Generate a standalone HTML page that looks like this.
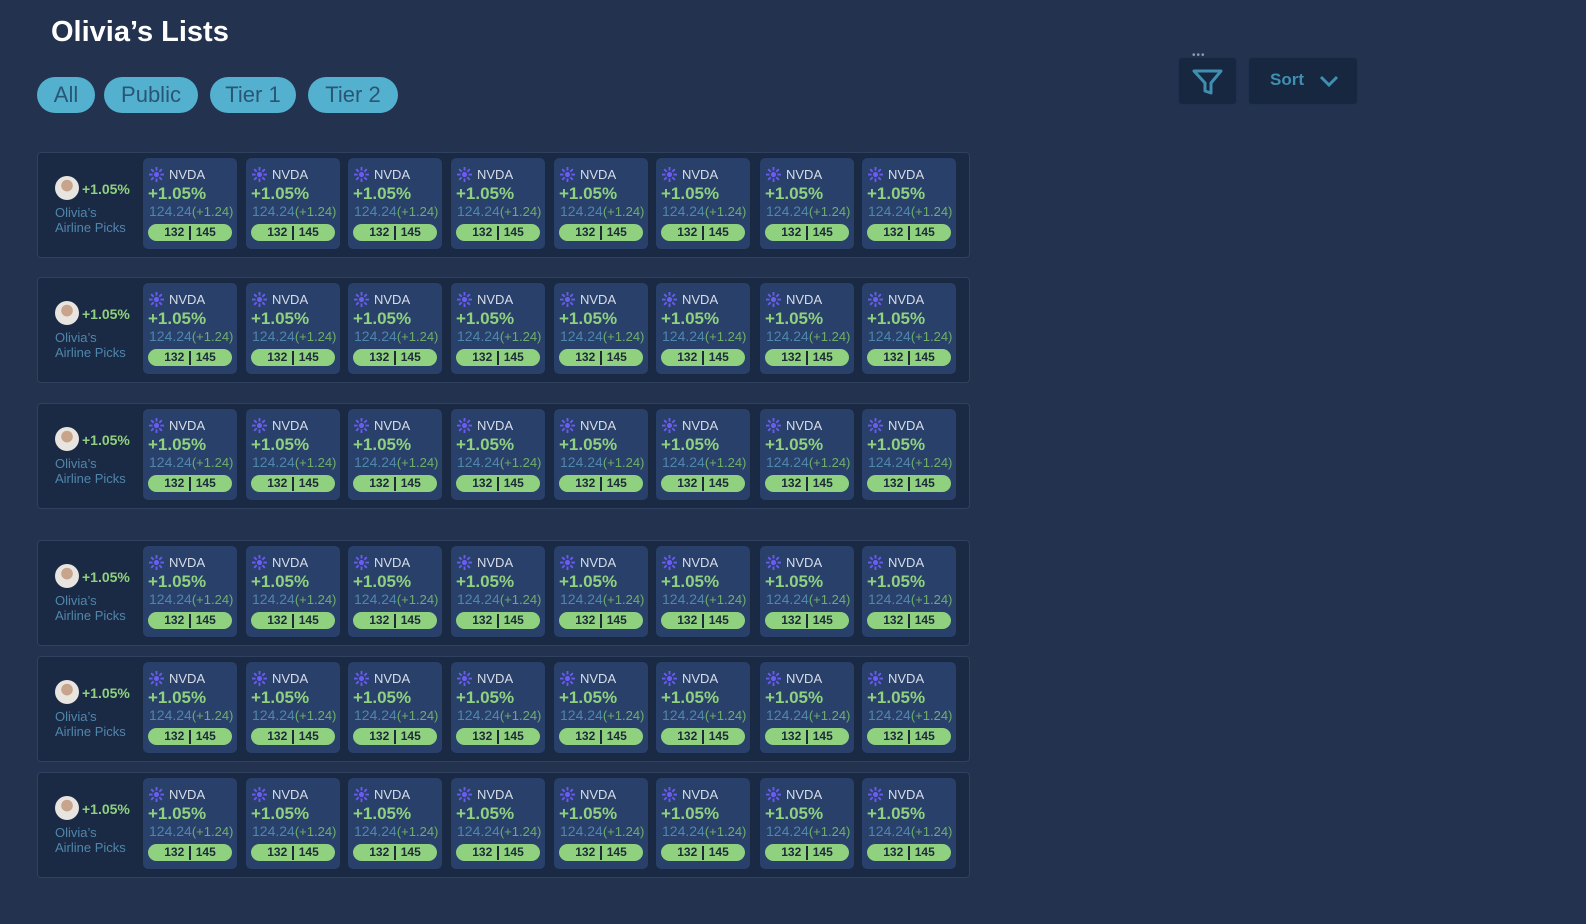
<!DOCTYPE html>
<html><head><style>
body{margin:0;width:1586px;height:924px;background:#22324f;font-family:"Liberation Sans",sans-serif;position:relative;overflow:hidden}
h1{position:absolute;left:51px;top:16px;margin:0;color:#fff;font-size:29px;font-weight:bold}
.tab{position:absolute;top:77px;height:36px;border-radius:18px;background:#53b0ce;color:#2a5676;font-size:22px;line-height:36px;text-align:center}
.row{position:absolute;left:37px;width:931px;height:104px;background:#1b2a44;border:1px solid #2f415e;border-radius:4px}
.lft{position:absolute;left:17px;top:23px}
.av{position:absolute;left:0;top:0;width:24px;height:24px;border-radius:50%;background:radial-gradient(circle at 50% 40%,#c9a48c 0 30%,#e8e4e0 32%);}
.lp{position:absolute;left:27px;top:5px;color:#8fd17f;font-size:14px;font-weight:bold;white-space:nowrap}
.ln{position:absolute;left:0;top:29px;color:#4f86ac;font-size:13px;line-height:15px;white-space:nowrap}
.card{position:absolute;top:4px;width:94px;height:91px;background:#28406a;border:1px solid #1a2840;border-radius:6px}
.ic{position:absolute;left:6px;top:9px;width:15px;height:15px}
.tk{position:absolute;left:26px;top:9px;color:#d8dde8;font-size:13px}
.pc{position:absolute;left:5px;top:26px;color:#8fd17f;font-size:17px;font-weight:bold}
.pr{position:absolute;left:6px;top:45px;color:#4f86ac;font-size:14px;white-space:nowrap}
.pr span{color:#6fae6a;font-size:13px}
.pill{position:absolute;left:5px;top:66px;width:84px;height:17px;border-radius:9px;background:#8fd17f;color:#1d2a3a;font-size:12px;font-weight:bold;line-height:17px;text-align:center}
.pill i{display:inline-block;width:1.5px;height:14px;background:#1d2a3a;vertical-align:middle;margin:0 5px}
.btn{position:absolute;top:57px;height:46px;background:#172740;border:1px solid #1f3150;border-radius:4px}
</style></head><body>
<h1>Olivia’s Lists</h1>
<div class="tab" style="left:37px;width:58px">All</div>
<div class="tab" style="left:104px;width:94px">Public</div>
<div class="tab" style="left:210px;width:86px">Tier 1</div>
<div class="tab" style="left:308px;width:90px">Tier 2</div>
<div style="position:absolute;left:1192px;top:50px;color:#8a9ab0;font-size:10px;letter-spacing:1px">•••</div>
<div class="btn" style="left:1178px;width:57px"><svg width="57" height="46"><path d="M15 13h27l-10 12v10l-6 -2v-8z" fill="none" stroke="#3f8fb0" stroke-width="3" stroke-linejoin="round"/></svg></div>
<div class="btn" style="left:1248px;width:108px"><span style="position:absolute;left:21px;top:12px;color:#3f8fb0;font-size:17px;font-weight:bold">Sort</span><svg style="position:absolute;left:69px;top:14px" width="22" height="18"><path d="M3 5l8 8 8-8" fill="none" stroke="#3f8fb0" stroke-width="3"/></svg></div>
<div id="rows"></div>
<script>
var tops=[152,277,403,540,656,772],xs=[104,207,309,412,515,617,721,823],h='';
var icon='<svg class="ic" viewBox="0 0 16 16"><g stroke="#6a5cf0" stroke-width="2"><path d="M8 0v16M0 8h16M2.3 2.3l11.4 11.4M13.7 2.3L2.3 13.7"/></g><circle cx="8" cy="8" r="3.5" fill="#6a5cf0" stroke="#28406a" stroke-width="1.5"/></svg>';
tops.forEach(function(t){h+='<div class="row" style="top:'+t+'px"><div class="lft"><div class="av"></div><div class="lp">+1.05%</div><div class="ln">Olivia’s<br>Airline Picks</div></div>';
xs.forEach(function(x){h+='<div class="card" style="left:'+x+'px">'+icon+'<div class="tk">NVDA</div><div class="pc">+1.05%</div><div class="pr">124.24<span>(+1.24)</span></div><div class="pill">132<i></i>145</div></div>';});
h+='</div>';});
document.getElementById('rows').innerHTML=h;
</script>
</body></html>
